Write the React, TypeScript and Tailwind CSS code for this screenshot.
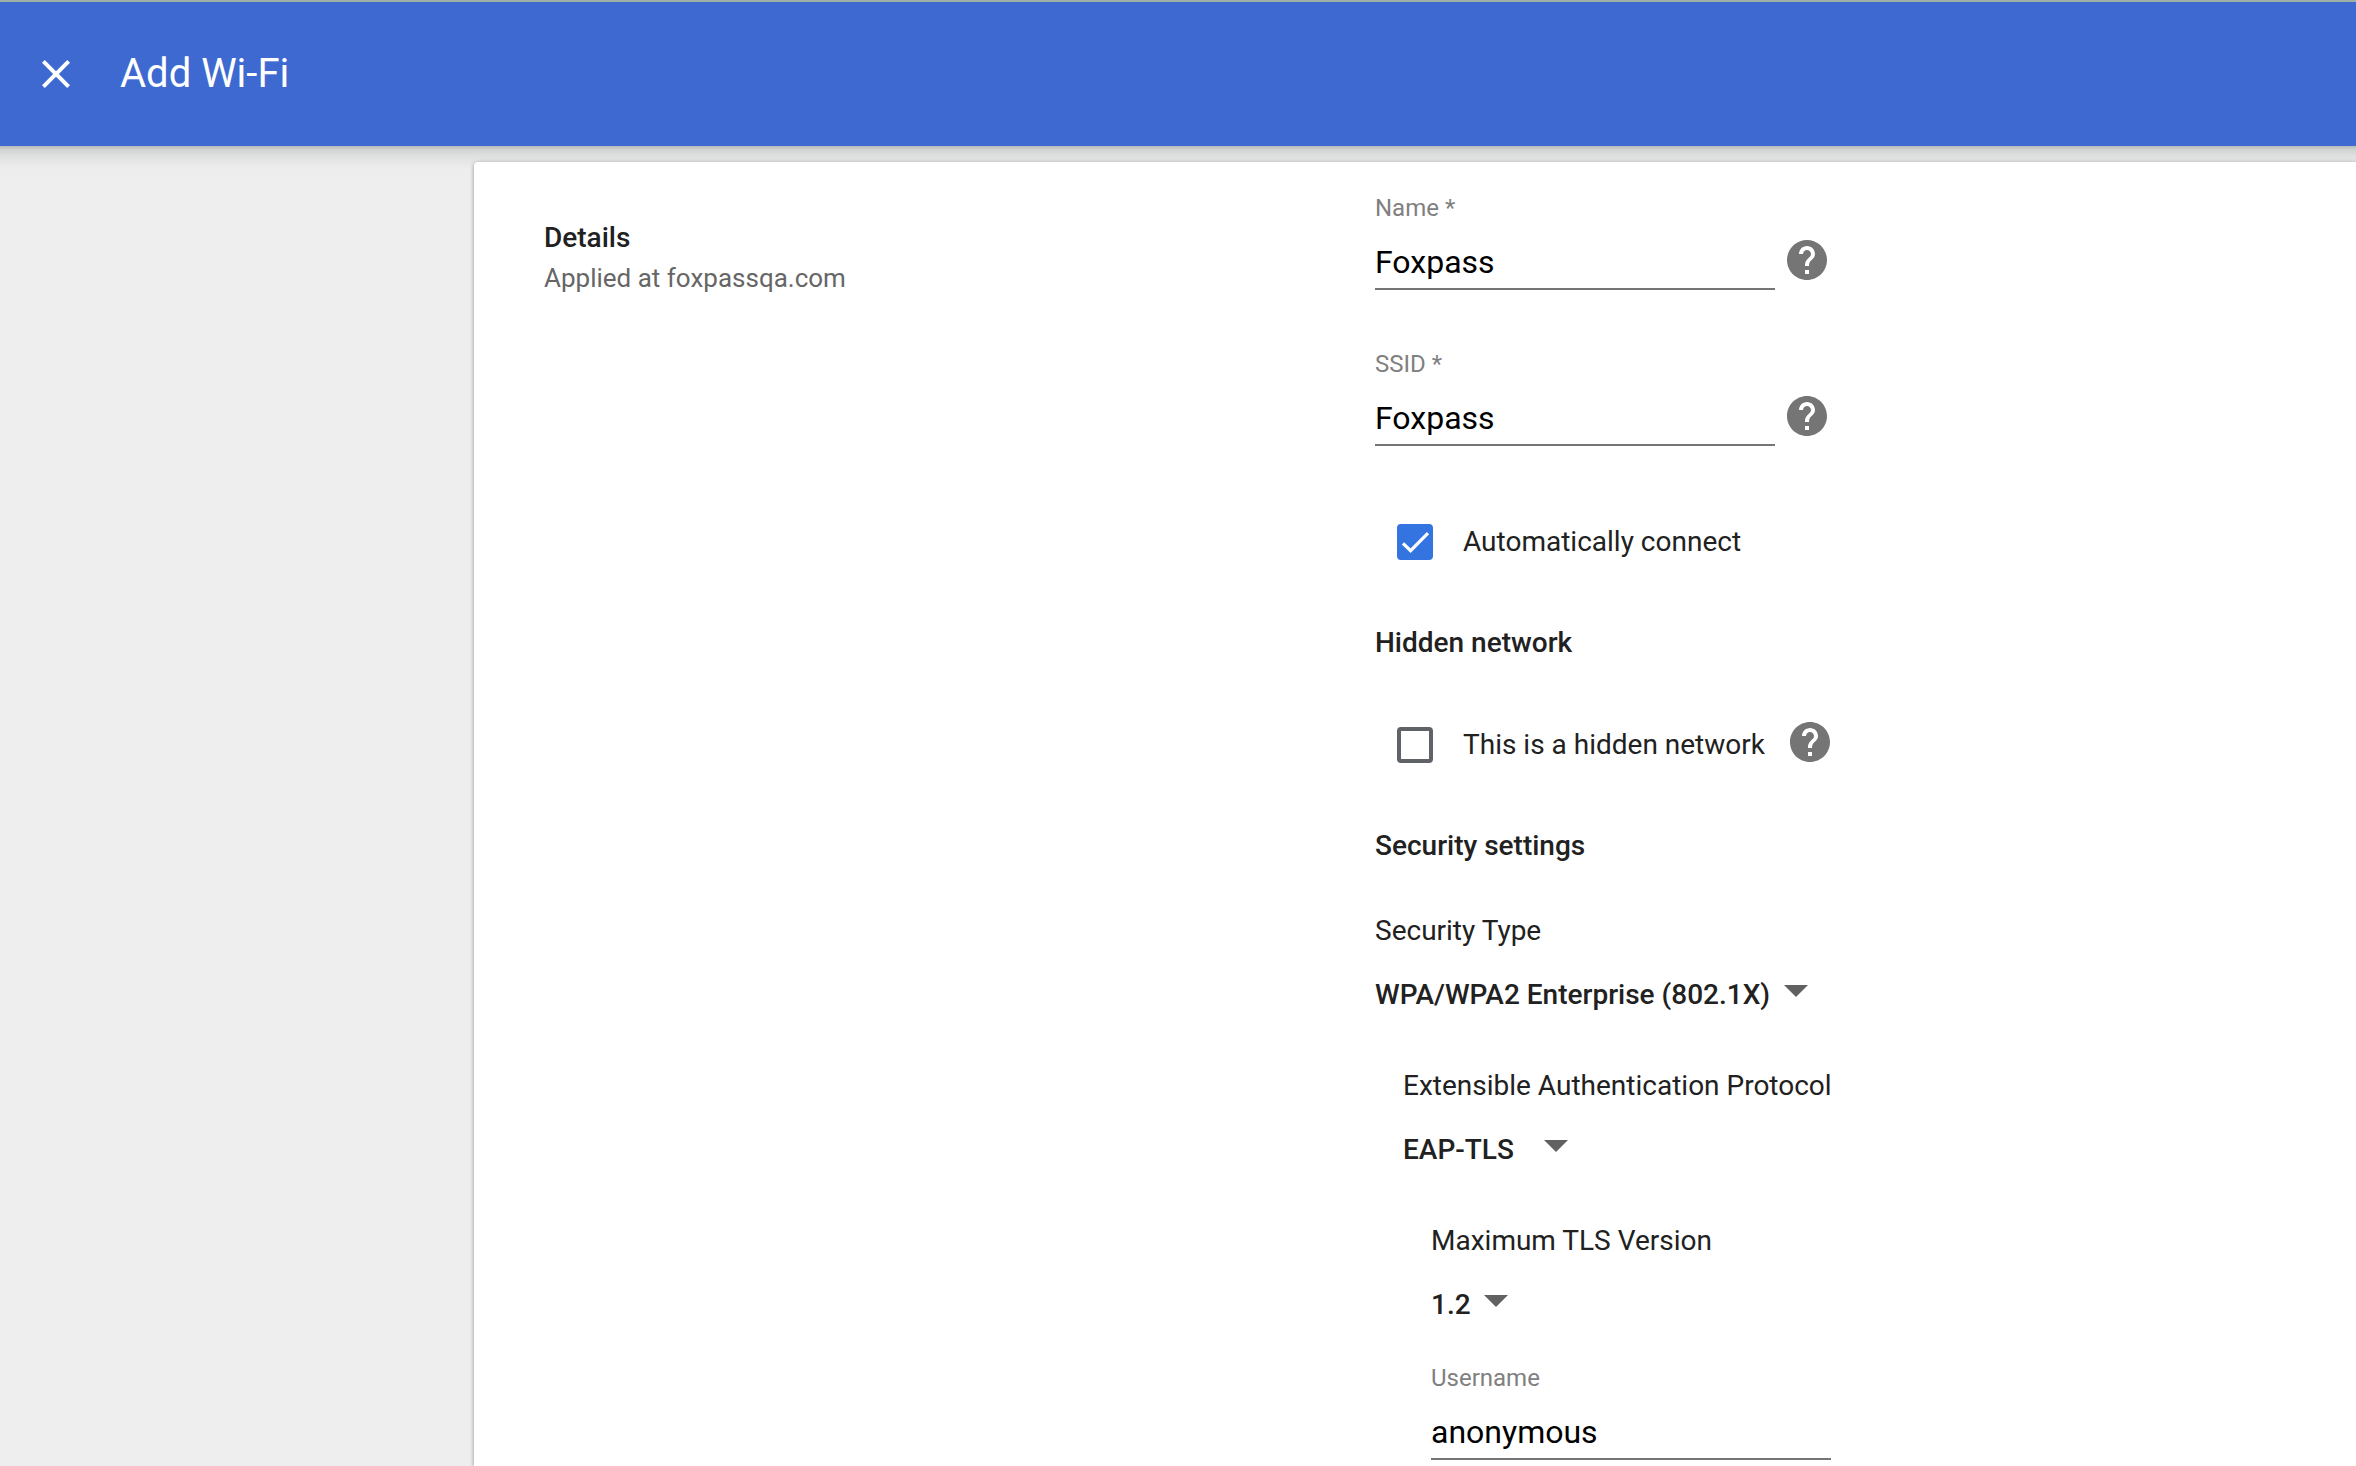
import { useId, useState } from "react";
import { MdClose, MdHelp } from "react-icons/md";

function HelpButton({ topic }: { topic: string }) {
  return (
    <button type="button" aria-label={`Help: ${topic}`} className="shrink-0 pb-1.5 text-[#757575]">
      <MdHelp className="size-12" />
    </button>
  );
}

function TextField({ label, initial, help }: { label: string; initial: string; help?: boolean }) {
  const id = useId();
  return (
    <div className="flex flex-col gap-3.5">
      <label htmlFor={id} className="text-2xl leading-7 text-[#808080]">
        {label}
      </label>
      <div className="flex h-[54px] items-center gap-2">
        <input
          id={id}
          type="text"
          defaultValue={initial}
          className="h-full w-[400px] border-b-2 border-[#757575] bg-transparent text-[32px] text-black outline-none"
        />
        {help && <HelpButton topic={label} />}
      </div>
    </div>
  );
}

function Checkbox({ label, initial = false, help }: { label: string; initial?: boolean; help?: boolean }) {
  const id = useId();
  const [checked, setChecked] = useState(initial);
  return (
    <div className="flex h-10 items-center pl-[22px]">
      <span className="relative flex size-9 shrink-0">
        <input
          id={id}
          type="checkbox"
          checked={checked}
          onChange={(e) => setChecked(e.target.checked)}
          className="size-9 appearance-none rounded-sm border-4 border-[#5f6368] checked:border-[#3474e0] checked:bg-[#3474e0]"
        />
        {checked && (
          <svg viewBox="0 0 36 36" fill="none" className="pointer-events-none absolute inset-0 size-9">
            <path d="M6 19.3l7.6 7.4L31 9.2" stroke="white" strokeWidth="3.2" />
          </svg>
        )}
      </span>
      <label htmlFor={id} className="w-[353px] pl-[30px] text-[28px] leading-10 whitespace-nowrap">
        {label}
      </label>
      {help && <HelpButton topic={label} />}
    </div>
  );
}

function SelectField({ label, value, width }: { label: string; value: string; width: string }) {
  const id = useId();
  return (
    <div className="flex flex-col items-start gap-7">
      <label htmlFor={id} className="text-[28px] leading-8 whitespace-nowrap">
        {label}
      </label>
      <div className={`relative ${width}`}>
        <select
          id={id}
          defaultValue={value}
          className="block h-10 w-full appearance-none bg-transparent text-[28px] leading-10 font-medium outline-none"
        >
          <option>{value}</option>
        </select>
        <svg
          viewBox="0 0 24 12"
          className="pointer-events-none absolute top-2.5 right-0 h-3 w-6 fill-[#616161]"
        >
          <path d="M0 0h24L12 12z" />
        </svg>
      </div>
    </div>
  );
}

export default function App() {
  return (
    <div className="flex h-screen flex-col overflow-hidden bg-[#eeeeee] font-['Roboto',sans-serif] text-[#212121]">
      <header className="relative z-10 flex h-[146px] shrink-0 items-center gap-10 border-t-2 border-[#9fafa6] bg-[#3e69d0] pl-8 text-white">
        <button type="button" aria-label="Close">
          <MdClose className="size-12" />
        </button>
        <h1 className="text-[40px] leading-12">Add Wi-Fi</h1>
      </header>

      <div className="grid grow grid-cols-[474px_1fr] bg-[linear-gradient(#b8bab9,#d2d4d3_4px,#dddfde_9px,#e6e7e6_16px,#eeeeee_24px)] pt-4">
        <main className="col-start-2 grid grid-cols-[831fr_981fr] rounded-tl-sm bg-white pl-[70px] shadow-[0_1px_4px_rgba(0,0,0,0.4)]">
          <section className="flex flex-col gap-2 pt-[60px]">
            <h2 className="text-[28px] leading-8 font-medium">Details</h2>
            <p className="text-[26px] leading-8 text-[#666666]">Applied at foxpassqa.com</p>
          </section>

          <form className="pt-8">
            <div className="flex flex-col gap-[60px]">
              <TextField label="Name *" initial="Foxpass" help />
              <TextField label="SSID *" initial="Foxpass" help />
            </div>
            <div className="mt-[76px]">
              <Checkbox label="Automatically connect" initial />
            </div>
            <h3 className="mt-[65px] text-[28px] leading-8 font-medium">Hidden network</h3>
            <div className="mt-[66px]">
              <Checkbox label="This is a hidden network" help />
            </div>
            <h3 className="mt-[65px] text-[28px] leading-8 font-medium">Security settings</h3>
            <div className="mt-[53px] flex flex-col gap-[55px]">
              <SelectField label="Security Type" value="WPA/WPA2 Enterprise (802.1X)" width="w-[433px]" />
              <div className="pl-7">
                <SelectField label="Extensible Authentication Protocol" value="EAP-TLS" width="w-[165px]" />
              </div>
              <div className="flex flex-col gap-[39px] pl-14">
                <SelectField label="Maximum TLS Version" value="1.2" width="w-[77px]" />
                <TextField label="Username" initial="anonymous" />
              </div>
            </div>
          </form>
        </main>
      </div>
    </div>
  );
}
